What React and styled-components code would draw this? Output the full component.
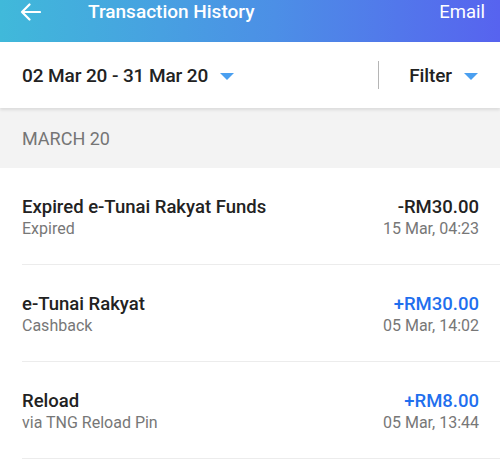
import React from 'react';
import styled, { createGlobalStyle } from 'styled-components';

// -- Global
const GlobalStyle = createGlobalStyle`
  * { box-sizing: border-box; }
  body {
    margin: 0;
    background: #ffffff;
    font-family: Roboto, "Liberation Sans", Arial, sans-serif;
    -webkit-font-smoothing: antialiased;
  }
`;

// -- Styled components
const Page = styled.div`
  width: 500px;
  display: flex;
  flex-direction: column;
`;

const Header = styled.header`
  height: 42px;
  display: flex;
  align-items: flex-start;
  padding: 0 15px 0 20px;
  background: linear-gradient(90deg, #40b9da 0%, #4c8fe6 55%, #5763ef 100%);
  color: #ffffff;
`;

const BackButton = styled.button`
  width: 22px;
  height: 24px;
  padding: 0;
  border: 0;
  background: none;
  display: flex;
  align-items: center;
  color: #ffffff;
`;

const Title = styled.h1`
  flex: 1;
  margin: 0 0 0 46px;
  font-size: 19px;
  line-height: 24px;
  font-weight: 500;
`;

const HeaderAction = styled.span`
  font-size: 18.5px;
  line-height: 24px;
  font-weight: 400;
`;

const FilterBar = styled.div`
  height: 66px;
  display: flex;
  align-items: center;
  padding: 0 22px;
  background: #ffffff;
  box-shadow: 0 2px 3px rgba(0, 0, 0, 0.1);
  position: relative;
  z-index: 1;
`;

const Dropdown = styled.div`
  display: flex;
  align-items: center;
  gap: 12px;
  font-size: 19px;
  font-weight: 500;
  color: #222222;
  letter-spacing: -0.1px;
`;

const DateRange = styled(Dropdown)`
  flex: 1;
`;

const Caret = styled.span`
  width: 0;
  height: 0;
  border-left: 7px solid transparent;
  border-right: 7px solid transparent;
  border-top: 7px solid #4a9ff0;
  margin-top: 2px;
`;

const Divider = styled.div`
  width: 1px;
  height: 28px;
  background: #b5b5b5;
  margin-right: 30px;
`;

const SectionHeader = styled.div`
  height: 60px;
  display: flex;
  align-items: center;
  padding: 0 22px;
  background: #f3f3f3;
  font-size: 18px;
  color: #757575;
`;

const List = styled.div`
  display: flex;
  flex-direction: column;
`;

const Row = styled.div`
  height: 97px;
  margin-left: 22px;
  padding: 3px 21px 0 0;
  display: flex;
  align-items: center;
  justify-content: space-between;
  border-bottom: 1px solid #ececec;
`;

const Column = styled.div`
  display: flex;
  flex-direction: column;
  align-items: ${({ $right }) => ($right ? 'flex-end' : 'flex-start')};
`;

const RowTitle = styled.span`
  font-size: 18.5px;
  line-height: 22px;
  font-weight: 500;
  color: ${({ $positive }) => ($positive ? '#1f6fee' : '#222222')};
`;

const RowSub = styled.span`
  margin-top: 1px;
  font-size: 16px;
  line-height: 20px;
  color: #777777;
`;
//---------------------------------------

const transactions = [
  { title: 'Expired e-Tunai Rakyat Funds', sub: 'Expired', amount: '-RM30.00', date: '15 Mar, 04:23' },
  { title: 'e-Tunai Rakyat', sub: 'Cashback', amount: '+RM30.00', date: '05 Mar, 14:02', positive: true },
  { title: 'Reload', sub: 'via TNG Reload Pin', amount: '+RM8.00', date: '05 Mar, 13:44', positive: true },
];

const App = () => {
  return (
    <>
      <GlobalStyle />
      <Page>
        <Header>
          <BackButton aria-label="Back">
            <svg width="21" height="18" viewBox="0 0 21 18" fill="none">
              <path
                d="M20 9H2M9.5 1.5L2 9l7.5 7.5"
                stroke="#ffffff"
                strokeWidth="2.2"
                strokeLinecap="round"
                strokeLinejoin="round"
              />
            </svg>
          </BackButton>
          <Title>Transaction History</Title>
          <HeaderAction>Email</HeaderAction>
        </Header>
        <FilterBar>
          <DateRange>
            02 Mar 20 - 31 Mar 20
            <Caret />
          </DateRange>
          <Divider />
          <Dropdown>
            Filter
            <Caret />
          </Dropdown>
        </FilterBar>
        <SectionHeader>MARCH 20</SectionHeader>
        <List>
          {transactions.map((t) => (
            <Row key={t.title}>
              <Column>
                <RowTitle>{t.title}</RowTitle>
                <RowSub>{t.sub}</RowSub>
              </Column>
              <Column $right>
                <RowTitle $positive={t.positive}>{t.amount}</RowTitle>
                <RowSub>{t.date}</RowSub>
              </Column>
            </Row>
          ))}
        </List>
      </Page>
    </>
  );
};

export default App;
